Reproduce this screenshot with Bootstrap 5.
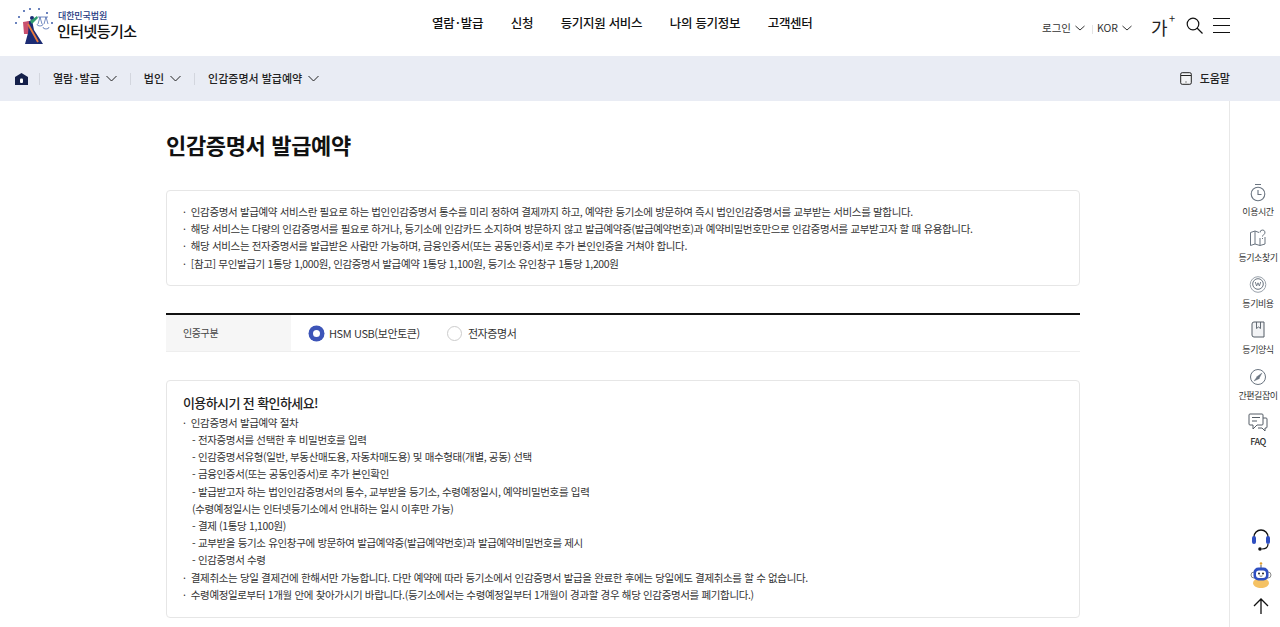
<!DOCTYPE html>
<html lang="ko">
<head>
  <meta charset="UTF-8">
  <title>인터넷등기소 - 인감증명서 발급예약</title>
  <link href="https://cdn.jsdelivr.net/npm/bootstrap@5.3.3/dist/css/bootstrap.min.css" rel="stylesheet">
  <style>
    body { font-family: "Noto Sans CJK KR", "Noto Sans", sans-serif; color: #222; height: 627px; overflow: hidden; }
    .top-head { height: 56px; padding: 0 50px 0 15px; }
    .logo-mark { margin-top: -4px; }
    .logo-box { margin-top: -7px; margin-left: 2px; }
    .logo-sub { font-size: 9px; line-height: 11px; color: #25397f; font-weight: 500; letter-spacing: -.1px; padding-left: 1px; }
    .logo-name { font-size: 15px; line-height: 19px; font-weight: 500; color: #111; letter-spacing: -.55px; }
    .gnb-list { position: absolute; left: 432px; top: 13px; gap: 27.5px; font-size: 12.5px; font-weight: 500; color: #111; line-height: 20px; letter-spacing: -.3px; }
    .mid-dot { margin: 0 1.5px; }
    .util-txt { font-size: 10.5px; color: #333; line-height: 16px; }
    .util-sep { width: 1px; height: 9px; background: #e4e4e4; margin: 2px 4px 0 7px; }
    .font-plus { width: 24px; font-size: 18px; line-height: 20px; color: #222; position: relative; margin: -3px 10px 0 19px; }
    .font-plus i { position: absolute; left: 18px; top: -5px; font-style: normal; font-size: 11px; line-height: 12px; }
    .search-ico { margin: -6px 0 0 1px; }
    .menu-ico { margin: -5px 0 0 10px; }
    .crumb-bar { height: 45px; background: #e9ecf4; padding: 0 50px 0 15px; font-size: 11px; font-weight: 500; color: #222; }
    .crumb-sep { width: 1px; height: 12px; background: #d3d6de; margin: 0 13px; }
    .crumb-sep.first-sep { margin-left: 11px; }
    .crumb-txt { margin-right: 6px; }
    .body-wrap { height: 526px; }
    .main-col { width: 914px; margin-left: 166px; }
    .page-title { font-size: 22px; font-weight: 700; line-height: 34px; color: #111; margin: 26px 0 29px; letter-spacing: -.35px; }
    .info-panel { border: 1px solid #e6e6e6; border-radius: 4px; padding: 12px 16px 13px; font-size: 10.5px; line-height: 17.2px; color: #333; letter-spacing: -.35px; }
    .info-panel p { margin: 0; padding-left: 9px; text-indent: -9px; }
    .auth-row { border-top: 2px solid #111; border-bottom: 1px solid #eee; height: 39px; margin: 27px 0 28px; font-size: 11px; color: #333; letter-spacing: -.4px; }
    .auth-label { width: 125px; background: #f6f6f6; padding-left: 17px; font-size: 10px; color: #444; letter-spacing: -.4px; }
    .auth-opts { padding: 1px 0 0 18px; }
    .radio-dot { width: 15px; height: 15px; border-radius: 50%; border: 1px solid #ccc; background: #fff; margin-right: 5px; }
    .radio-dot.on { border: 4px solid #3d55b8; box-shadow: 0 0 0 .5px #3d55b8; }
    .radio-dot.off { margin-left: 27px; margin-right: 6px; }
    .notice-title { font-size: 13px; font-weight: 500; line-height: 22px; color: #222; letter-spacing: -.6px; }
    .notice-panel { padding: 11px 16px 14px; }
    .notice-panel p.sub-line { padding-left: 9px; text-indent: 0; }
    .side-rail { width: 51px; margin-left: auto; border-left: 1px solid #e8e8e8; font-size: 9px; color: #333; padding: 82px 0 13px 6px; letter-spacing: -.45px; }
    .rail-item { height: 46px; }
    .rail-item svg { display: block; margin-bottom: 3px; }
    .rail-tools { margin-left: 6px; gap: 10px; }
  </style>
</head>
<body>

  <!-- top header -->
  <header class="top-head d-flex align-items-center position-relative bg-white">
    <svg width="40" height="38" viewBox="0 0 40 38" class="logo-mark flex-shrink-0">
      <g fill="#3a5aa8">
        <circle cx="1" cy="16" r="1"/><circle cx="4" cy="10" r="1"/><circle cx="9" cy="4" r="1"/><circle cx="15" cy="2" r="1"/><circle cx="24" cy="2" r="1"/><circle cx="32" cy="6" r="1"/><circle cx="37" cy="16" r="1"/>
      </g>
      <path d="M12 15l5-2 2 10 9 14H10l3-11z" fill="#1c2c74"/>
      <path d="M8 15l6-1-1 13H9z" fill="#c9506f"/>
      <circle cx="17" cy="11" r="2" fill="#1c2c74"/>
      <path d="M15 14l7-5 1 2-6 6z" fill="#2f9c6e"/>
      <path d="M13 17l10 18" stroke="#ea7a3c" stroke-width="1.800"/>
      <path d="M23 10h10M25 10l-2 7M25 10l2 7M31 10l-2 7M31 10l2 7M22 17a3 2 0 0 0 6 0M28 20a3 2 0 0 0 6 0" stroke="#3a5aa8" stroke-width=".7" fill="none"/>
    </svg>
    <div class="logo-box">
      <div class="logo-sub">대한민국법원</div>
      <div class="logo-name">인터넷등기소</div>
    </div>
    <nav class="gnb-list d-flex">
      <span>열람<span class="mid-dot">·</span>발급</span><span>신청</span><span>등기지원 서비스</span><span>나의 등기정보</span><span>고객센터</span>
    </nav>
    <div class="ms-auto d-flex align-items-center">
      <span class="util-txt">로그인</span>
      <svg width="10" height="6" viewBox="0 0 10 6" class="ms-1"><path d="M.5 1l4.500 4 4.500-4" fill="none" stroke="#333"/></svg>
      <span class="util-sep"></span>
      <span class="util-txt">KOR</span>
      <svg width="10" height="6" viewBox="0 0 10 6" class="ms-1"><path d="M.5 1l4.500 4 4.500-4" fill="none" stroke="#333"/></svg>
      <span class="font-plus">가<i>+</i></span>
      <svg width="17" height="17" viewBox="0 0 17 17" class="search-ico"><circle cx="7" cy="7" r="5.800" fill="none" stroke="#111" stroke-width="1.200"/><path d="M11 11l5.500 5.500" stroke="#111" stroke-width="1.200"/></svg>
      <svg width="17" height="15" viewBox="0 0 17 15" class="menu-ico"><path d="M0 .5h17M0 7.500h17M0 14.500h17" stroke="#111"/></svg>
    </div>
  </header>

  <!-- breadcrumb -->
  <div class="crumb-bar d-flex align-items-center">
    <svg width="13" height="12" viewBox="0 0 13 12"><path d="M6.500 0L13 4v8H0V4z" fill="#15204a"/><rect x="5" y="5.500" width="3" height="4.500" rx="1" fill="#fff"/></svg>
    <span class="crumb-sep first-sep"></span>
    <span class="crumb-txt">열람<span class="mid-dot">·</span>발급</span>
    <svg width="11" height="7" viewBox="0 0 11 7"><path d="M.5 1l5 5 5-5" fill="none" stroke="#222"/></svg>
    <span class="crumb-sep"></span>
    <span class="crumb-txt">법인</span>
    <svg width="11" height="7" viewBox="0 0 11 7"><path d="M.5 1l5 5 5-5" fill="none" stroke="#222"/></svg>
    <span class="crumb-sep"></span>
    <span class="crumb-txt">인감증명서 발급예약</span>
    <svg width="11" height="7" viewBox="0 0 11 7"><path d="M.5 1l5 5 5-5" fill="none" stroke="#222"/></svg>
    <svg width="12" height="13" viewBox="0 0 12 13" class="ms-auto me-2"><rect x=".7" y=".7" width="10.600" height="11.600" rx="1.500" fill="#f3f4f6" stroke="#222"/><path d="M1 3.500h10" stroke="#222"/><path d="M5.500 10h1" stroke="#222"/></svg>
    <span>도움말</span>
  </div>

  <div class="body-wrap d-flex">
    <main class="main-col">
      <h1 class="page-title">인감증명서 발급예약</h1>

      <div class="info-panel">
        <p>· &nbsp;인감증명서 발급예약 서비스란 필요로 하는 법인인감증명서 통수를 미리 정하여 결제까지 하고, 예약한 등기소에 방문하여 즉시 법인인감증명서를 교부받는 서비스를 말합니다.</p>
        <p>· &nbsp;해당 서비스는 다량의 인감증명서를 필요로 하거나, 등기소에 인감카드 소지하여 방문하지 않고 발급예약증(발급예약번호)과 예약비밀번호만으로 인감증명서를 교부받고자 할 때 유용합니다.</p>
        <p>· &nbsp;해당 서비스는 전자증명서를 발급받은 사람만 가능하며, 금융인증서(또는 공동인증서)로 추가 본인인증을 거쳐야 합니다.</p>
        <p>· &nbsp;[참고] 무인발급기 1통당 1,000원, 인감증명서 발급예약 1통당 1,100원, 등기소 유인창구 1통당 1,200원</p>
      </div>

      <div class="auth-row d-flex">
        <div class="auth-label d-flex align-items-center">인증구분</div>
        <div class="auth-opts d-flex align-items-center">
          <span class="radio-dot on"></span><span>HSM USB(보안토큰)</span>
          <span class="radio-dot off"></span><span>전자증명서</span>
        </div>
      </div>

      <div class="info-panel notice-panel">
        <div class="notice-title">이용하시기 전 확인하세요!</div>
        <p>· &nbsp;인감증명서 발급예약 절차</p>
        <p class="sub-line">- 전자증명서를 선택한 후 비밀번호를 입력</p>
        <p class="sub-line">- 인감증명서유형(일반, 부동산매도용, 자동차매도용) 및 매수형태(개별, 공동) 선택</p>
        <p class="sub-line">- 금융인증서(또는 공동인증서)로 추가 본인확인</p>
        <p class="sub-line">- 발급받고자 하는 법인인감증명서의 통수, 교부받을 등기소, 수령예정일시, 예약비밀번호를 입력</p>
        <p class="sub-line">(수령예정일시는 인터넷등기소에서 안내하는 일시 이후만 가능)</p>
        <p class="sub-line">- 결제 (1통당 1,100원)</p>
        <p class="sub-line">- 교부받을 등기소 유인창구에 방문하여 발급예약증(발급예약번호)과 발급예약비밀번호를 제시</p>
        <p class="sub-line">- 인감증명서 수령</p>
        <p>· &nbsp;결제취소는 당일 결제건에 한해서만 가능합니다. 다만 예약에 따라 등기소에서 인감증명서 발급을 완료한 후에는 당일에도 결제취소를 할 수 없습니다.</p>
        <p>· &nbsp;수령예정일로부터 1개월 안에 찾아가시기 바랍니다.(등기소에서는 수령예정일부터 1개월이 경과할 경우 해당 인감증명서를 폐기합니다.)</p>
      </div>
    </main>

    <aside class="side-rail d-flex flex-column align-items-center">
      <div class="rail-item d-flex flex-column align-items-center">
        <svg width="18" height="19" viewBox="0 0 18 19"><circle cx="9" cy="11" r="6.800" fill="none" stroke="#6a7480" stroke-width="1.100"/><path d="M6 1.500h6M9 7v4.500h3.500" fill="none" stroke="#6a7480" stroke-width="1.100"/></svg>
        <span>이용시간</span>
      </div>
      <div class="rail-item d-flex flex-column align-items-center">
        <svg width="18" height="19" viewBox="0 0 18 19"><path d="M10 3.500L6 2 1.500 3.500v13L6 15l5 1.500 5-1.500V8M6 2v13M11 9v7.500" fill="none" stroke="#6a7480"/><path d="M11 3.500a2.500 2.500 0 1 1 3.500 2.300c-.7.4-1 .8-1 1.700M13.500 9v1" fill="none" stroke="#6a7480"/></svg>
        <span>등기소찾기</span>
      </div>
      <div class="rail-item d-flex flex-column align-items-center">
        <svg width="18" height="19" viewBox="0 0 18 19"><circle cx="9" cy="9.500" r="7.800" fill="none" stroke="#9aa2ab"/><circle cx="9" cy="9" r="5.300" fill="none" stroke="#6a7480"/><path d="M6.300 7l1.300 4L9 7.800l1.400 3.200L11.700 7" fill="none" stroke="#6a7480" stroke-width=".9"/></svg>
        <span>등기비용</span>
      </div>
      <div class="rail-item d-flex flex-column align-items-center">
        <svg width="18" height="19" viewBox="0 0 18 19"><path d="M3 3a2 2 0 0 1 2-2h10v15H5a2 2 0 0 1-2-2z" fill="#f2f3f5" stroke="#555d66"/><path d="M7.500 1v6.500l2-1.500 2 1.500V1" fill="none" stroke="#555d66" stroke-width=".9"/></svg>
        <span>등기양식</span>
      </div>
      <div class="rail-item d-flex flex-column align-items-center">
        <svg width="18" height="19" viewBox="0 0 18 19"><circle cx="9" cy="10" r="7.500" fill="none" stroke="#6a7480"/><path d="M13 6l-3 5.500-2.500-1.500zM5 14l3-4 2.500 1.500z" fill="#6a7480" stroke="#6a7480" stroke-width=".4"/></svg>
        <span>간편길잡이</span>
      </div>
      <div class="rail-item d-flex flex-column align-items-center fw-medium">
        <svg width="20" height="19" viewBox="0 0 20 19"><path d="M2 1h12a1 1 0 0 1 1 1v9a1 1 0 0 1-1 1H9l-4 4v-4H2a1 1 0 0 1-1-1V2a1 1 0 0 1 1-1z" fill="none" stroke="#555d66"/><path d="M15 5h3a1 1 0 0 1 1 1v8a1 1 0 0 1-1 1h-1v3l-3-3h-4" fill="none" stroke="#555d66"/><path d="M4 4.500h8M4 8h5" stroke="#555d66"/></svg>
        <span>FAQ</span>
      </div>
      <div class="rail-tools mt-auto d-flex flex-column align-items-center">
        <svg width="20" height="24" viewBox="0 0 20 24"><path d="M3 9a7 7 0 0 1 14 0" fill="none" stroke="#111" stroke-width="1.400"/><rect x="1" y="8" width="4" height="8" rx="2" fill="#2f4fc1"/><rect x="15" y="8" width="4" height="8" rx="2" fill="#2f4fc1"/><path d="M17 16c0 4-3 5-6 5" fill="none" stroke="#111" stroke-width="1.200"/><circle cx="9" cy="21" r="1.800" fill="#111"/></svg>
        <svg width="22" height="26" viewBox="0 0 22 26"><circle cx="11" cy="1.500" r="1.300" fill="#e0a030"/><path d="M11 3v3" stroke="#555"/><path d="M3 21a8 5 0 0 1 16 0c0 3-4 5-8 5s-8-2-8-5z" fill="#f5c264"/><rect x="1" y="10" width="20" height="6" rx="3" fill="none" stroke="#888"/><rect x="3.500" y="5.500" width="15" height="13" rx="5" fill="#2f4fc1"/><rect x="6" y="8.500" width="10" height="7.500" rx="3" fill="#fff"/><circle cx="9" cy="11.500" r="1" fill="#222"/><circle cx="13" cy="11.500" r="1" fill="#222"/><path d="M9.500 13.800q1.500 1 3 0" fill="none" stroke="#222" stroke-width=".6"/></svg>
        <svg width="16" height="16" viewBox="0 0 16 16"><path d="M8 16V1M1 8l7-7 7 7" fill="none" stroke="#111" stroke-width="1.300"/></svg>
      </div>
    </aside>
  </div>

  <script src="https://cdn.jsdelivr.net/npm/bootstrap@5.3.3/dist/js/bootstrap.bundle.min.js"></script>
</body>
</html>
